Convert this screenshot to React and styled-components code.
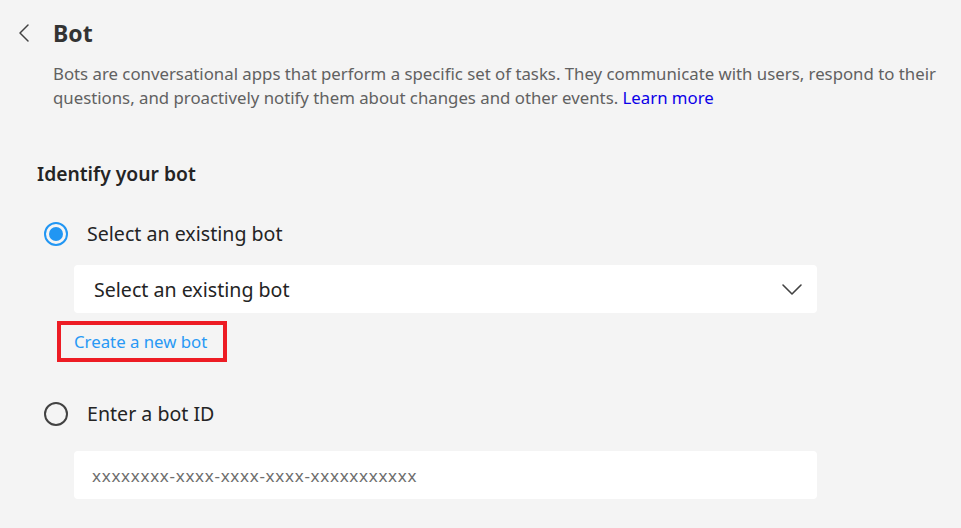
import React from 'react'
import styled, { createGlobalStyle } from 'styled-components'

const GlobalStyle = createGlobalStyle`
  html, body {
    margin: 0;
    background: #f4f4f4;
  }
  body {
    font-family: "Segoe UI", "Noto Sans", "Open Sans", sans-serif;
    color: #242424;
  }
`

const Page = styled.div`
  width: 961px;
  height: 528px;
  overflow: hidden;
  box-sizing: border-box;
  padding: 14px 0 0 0;
`

const TitleRow = styled.div`
  display: flex;
  align-items: center;
  height: 38px;
`

const BackButton = styled.button`
  width: 53px;
  height: 38px;
  padding: 0 0 0 18px;
  border: none;
  background: none;
  display: flex;
  align-items: center;
  color: #424242;
  cursor: pointer;
`

const Title = styled.h1`
  margin: 0;
  font-size: 23px;
  font-weight: 700;
  color: #333;
`

const Description = styled.p`
  margin: 10px 10px 0 53px;
  font-size: 16.8px;
  line-height: 24px;
  color: #616161;
`

const Link = styled.a`
  color: #0b00e8;
  text-decoration: none;
`

const Section = styled.section`
  padding: 51px 0 0 37px;
`

const SectionTitle = styled.h2`
  margin: 0;
  font-size: 19.3px;
  font-weight: 600;
  line-height: 26px;
  color: #242424;
`

const Option = styled.label`
  display: flex;
  align-items: center;
  gap: 19px;
  margin: ${p => p.$top}px 0 0 7px;
  font-size: 19.6px;
  color: #242424;
  cursor: pointer;
`

const Radio = styled.span`
  width: 24px;
  height: 24px;
  box-sizing: border-box;
  border-radius: 50%;
  border: 2px solid ${p => (p.$checked ? '#2196f3' : '#424242')};
  display: flex;
  align-items: center;
  justify-content: center;
  flex: none;
  &::after {
    content: '';
    width: 14px;
    height: 14px;
    border-radius: 50%;
    background: #2196f3;
    display: ${p => (p.$checked ? 'block' : 'none')};
  }
`

const Field = styled.div`
  margin: ${p => p.$top}px 0 0 37px;
  width: 743px;
  height: 48px;
  box-sizing: border-box;
  background: #fff;
  border-radius: 4px;
  display: flex;
  align-items: center;
  justify-content: space-between;
  padding: 0 14px 0 ${p => (p.$placeholder ? '18px' : '20px')};
  font-size: ${p => (p.$placeholder ? '17px' : '19.6px')};
  letter-spacing: ${p => (p.$placeholder ? '0.7px' : 'normal')};
  color: ${p => (p.$placeholder ? '#6e6e6e' : '#242424')};
`

const Highlight = styled.div`
  margin: 8px 0 0 20px;
  width: 170px;
  height: 41px;
  box-sizing: border-box;
  border: 4px solid #ed1c24;
  display: flex;
  align-items: center;
  padding-left: 13px;
`

const CreateLink = styled.a`
  font-size: 16.8px;
  color: #2899f5;
  text-decoration: none;
`

const Chevron = () => (
  <svg width="22" height="22" viewBox="0 0 22 22" fill="none">
    <path d="M2 7l9 9 9-9" stroke="#424242" strokeWidth="1.6" strokeLinecap="round" strokeLinejoin="round" />
  </svg>
)

export default function App() {
  return (
    <Page>
      <GlobalStyle />
      <TitleRow>
        <BackButton aria-label="Back">
          <svg width="14" height="20" viewBox="0 0 14 20" fill="none">
            <path d="M10 2L2 10l8 8" stroke="#424242" strokeWidth="1.5" strokeLinecap="round" strokeLinejoin="round" />
          </svg>
        </BackButton>
        <Title>Bot</Title>
      </TitleRow>
      <Description>
        Bots are conversational apps that perform a specific set of tasks. They communicate with users, respond to their
        questions, and proactively notify them about changes and other events. <Link href="#">Learn more</Link>
      </Description>
      <Section>
        <SectionTitle>Identify your bot</SectionTitle>
        <Option $top={33}>
          <Radio $checked />
          Select an existing bot
        </Option>
        <Field $top={18}>
          Select an existing bot
          <Chevron />
        </Field>
        <Highlight>
          <CreateLink href="#">Create a new bot</CreateLink>
        </Highlight>
        <Option $top={38}>
          <Radio />
          Enter a bot ID
        </Option>
        <Field $top={24} $placeholder>
          xxxxxxxx-xxxx-xxxx-xxxx-xxxxxxxxxxx
        </Field>
      </Section>
    </Page>
  )
}
